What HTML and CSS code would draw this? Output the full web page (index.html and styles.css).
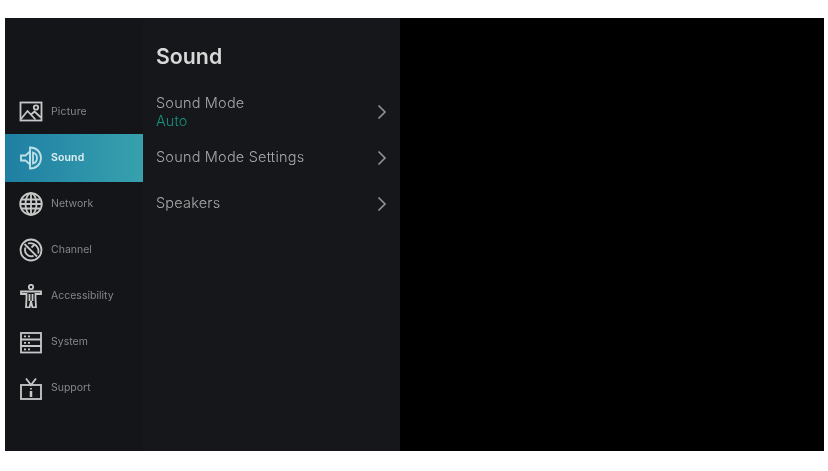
FILE: index.html
```html
<!DOCTYPE html>
<html lang="en">
<head>
    <meta charset="UTF-8">
    <meta name="viewport" content="width=device-width, initial-scale=1.0">
    <title>Sound Settings</title>
    <link rel="stylesheet" href="styles.css">
</head>
<body>
    <div class="screen">
        <nav class="sidebar">
            <div class="nav-item">
                <svg class="nav-icon" viewBox="0 0 24 24"><rect x="1.500" y="3.500" width="21" height="18"/><path d="M2 20l6.500-8 8 8.500M12 15.500l3.500-3 6.500 6"/><circle cx="17" cy="8.500" r="2.200"/></svg>
                <span>Picture</span>
            </div>
            <div class="nav-item active">
                <svg class="nav-icon" viewBox="0 0 24 24"><path d="M2 9.500h4.500L11 5.500v13l-4.500-4H2z"/><path d="M11 1.500c6.500 0 11 4.500 11 10.500s-4.500 10.500-11 10.500z"/><path d="M14 6.500c2.500.8 4 3 4 5.500s-1.500 4.700-4 5.500z"/></svg>
                <span>Sound</span>
            </div>
            <div class="nav-item">
                <svg class="nav-icon" viewBox="0 0 24 24"><circle cx="12" cy="12" r="10.800"/><ellipse cx="12" cy="12" rx="5.500" ry="10.800"/><path d="M12 1.500v21M2.800 7.500h18.400M1.500 12h21M2.800 16.500h18.400"/></svg>
                <span>Network</span>
            </div>
            <div class="nav-item">
                <svg class="nav-icon" viewBox="0 0 24 24"><circle cx="12" cy="12" r="10.500"/><path d="M5.500 6l12.500 12.500"/><path d="M9 5.500c3-.8 6 0 8 2s3 5 2.200 8"/><path d="M6.500 9.500c-1 2.500-.5 5 1.300 6.800s4.300 2.500 6.700 1.500"/><path d="M12.500 9.500l3-3"/></svg>
                <span>Channel</span>
            </div>
            <div class="nav-item">
                <svg class="nav-icon" viewBox="0 0 24 24"><circle cx="12" cy="3" r="2.200"/><path d="M2 7.500h20v2.500h-5.500v4l.5 9.500h-3.500L12 17l-1.500 6.500H7l.5-9.500v-4H2z"/><path d="M10.500 10v7M13.500 10v7"/></svg>
                <span>Accessibility</span>
            </div>
            <div class="nav-item">
                <svg class="nav-icon" viewBox="0 0 24 24"><rect x="2" y="3" width="20" height="19.500"/><path d="M2 9.500h20M2 16h20M5 6.300h2M9 6.300h2M5 12.800h2M9 12.800h2M5 19.300h2M9 19.300h2"/></svg>
                <span>System</span>
            </div>
            <div class="nav-item">
                <svg class="nav-icon" viewBox="0 0 24 24"><rect x="2" y="9" width="20" height="14"/><path d="M7 2.500L12 9l5-6.500M12 12v1.500"/><path class="thick" d="M12 15v6"/></svg>
                <span>Support</span>
            </div>
        </nav>
        <main class="panel">
            <h1>Sound</h1>
            <div class="row row-first">
                <div class="row-text">
                    <div class="row-label">Sound Mode</div>
                    <div class="row-value">Auto</div>
                </div>
                <svg class="chevron" viewBox="0 0 10 16"><path d="M1.500 1.500L8 8l-6.500 6.500"/></svg>
            </div>
            <div class="row">
                <div class="row-label">Sound Mode Settings</div>
                <svg class="chevron" viewBox="0 0 10 16"><path d="M1.500 1.500L8 8l-6.500 6.500"/></svg>
            </div>
            <div class="row">
                <div class="row-label">Speakers</div>
                <svg class="chevron" viewBox="0 0 10 16"><path d="M1.500 1.500L8 8l-6.500 6.500"/></svg>
            </div>
        </main>
        <div class="blank"></div>
    </div>
</body>
</html>
```
FILE: styles.css
```css
html, body {
    margin: 0;
    height: 100%;
    background-color: #fff;
}
body {
    padding: 18px 4px 20px 5px;
    box-sizing: border-box;
    font-family: "Inter", "Liberation Sans", sans-serif;
}
.screen {
    display: flex;
    height: 433px;
    background-color: #000;
}
.sidebar {
    width: 138px;
    padding-top: 70px;
    box-sizing: border-box;
    background-color: #131519;
}
.nav-item {
    display: flex;
    align-items: center;
    gap: 8px;
    height: 46px;
    padding-left: 14px;
    font-size: 10.500px;
    color: #858688;
}
.nav-item span {
    padding-bottom: 2px;
    filter: blur(0.3px);
}
.nav-item:first-child span {
    padding-bottom: 0;
    letter-spacing: 0.15px;
}
.nav-item.active {
    height: 48px;
    margin-bottom: -1px;
    background: linear-gradient(90deg, #1f7fa3, #37a1ae);
    color: #e4eff2;
    font-weight: 600;
    letter-spacing: 0.15px;
}
.nav-icon {
    width: 24px;
    height: 24px;
    flex: none;
    fill: none;
    stroke: #c8c8c8;
    stroke-width: 1.800;
    filter: blur(0.3px);
}
.active .nav-icon {
    stroke: #bfe0e8;
}
.thick {
    stroke-width: 2.500;
}
.panel {
    width: 257px;
    padding-left: 13px;
    padding-right: 13px;
    box-sizing: border-box;
    background-color: #15171a;
}
h1 {
    margin: 24px 0 0;
    font-size: 21.300px;
    line-height: 28px;
    font-weight: 600;
    color: #d8d8d8;
    filter: blur(0.3px);
}
.row {
    display: flex;
    align-items: center;
    justify-content: space-between;
    height: 46px;
}
.row-first {
    margin-top: 18px;
}
.row-label {
    padding-bottom: 1px;
    font-size: 14.500px;
    font-weight: 300;
    letter-spacing: 0.2px;
    line-height: 17px;
    color: #a8a9aa;
    filter: blur(0.3px);
}
.row-value {
    font-size: 14.500px;
    font-weight: 300;
    letter-spacing: 0.1px;
    line-height: 17px;
    color: #17917f;
    filter: blur(0.3px);
}
.chevron {
    width: 10px;
    height: 16px;
    margin-top: 2px;
    fill: none;
    stroke: #8f9092;
    stroke-width: 1.700;
}
.blank {
    flex: 1;
}
```
